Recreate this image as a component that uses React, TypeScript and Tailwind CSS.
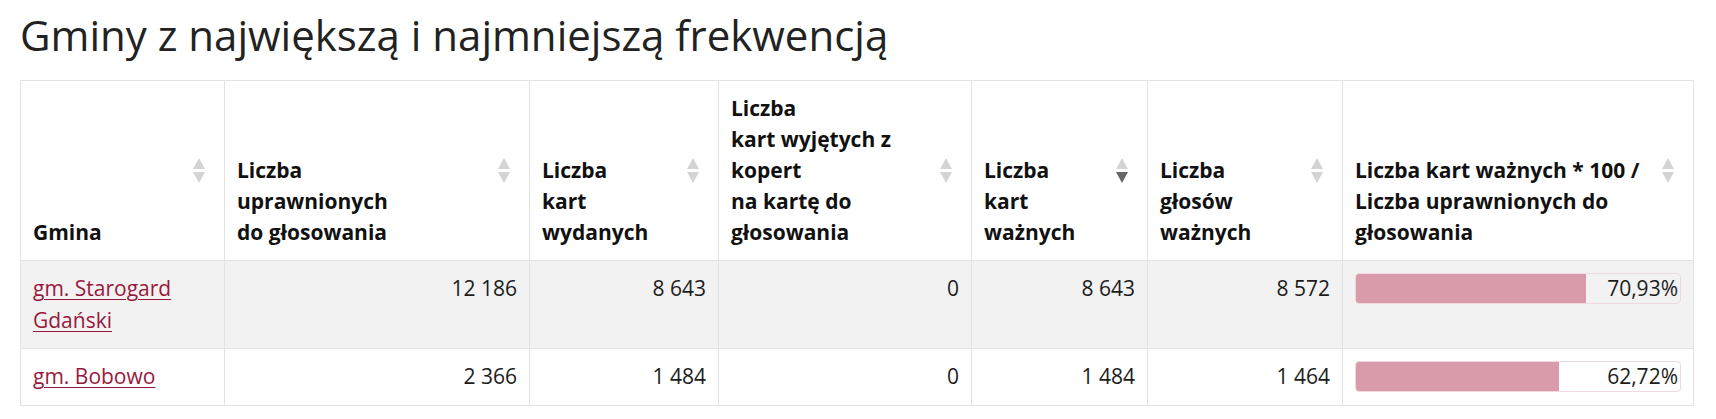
import React from "react";

type SortState = "none" | "desc";

function SortIcon({ state }: { state: SortState }) {
  const up = "#d4d4d4";
  const down = state === "desc" ? "#666666" : "#d4d4d4";
  return (
    <svg width="12" height="26" viewBox="0 0 12 26" className="block">
      <polygon points="6,0 12,11 0,11" fill={up} />
      <polygon points="0,14 12,14 6,25" fill={down} />
    </svg>
  );
}

function Th({
  children,
  state = "none",
}: {
  children: React.ReactNode;
  state?: SortState;
}) {
  return (
    <th className="relative border border-[#e3e3e3] p-3 pr-[44px] text-left align-bottom font-bold leading-[31px] text-[#111]">
      {children}
      <span className="absolute right-[19px] top-1/2 -translate-y-1/2">
        <SortIcon state={state} />
      </span>
    </th>
  );
}

function Bar({ pct, label }: { pct: number; label: string }) {
  return (
    <div className="grid h-[31px] overflow-hidden rounded-[4px] border border-[#f0d9de]">
      <div
        className="[grid-area:1/1] h-full bg-[#d99ba9]"
        style={{ width: `${pct}%` }}
      />
      <div className="[grid-area:1/1] flex items-center justify-end pr-[2px] leading-[29px]">
        {label}
      </div>
    </div>
  );
}

const rows = [
  {
    name: "gm. Starogard Gdański",
    a: "12 186",
    b: "8 643",
    c: "0",
    d: "8 643",
    e: "8 572",
    pct: 70.93,
    label: "70,93%",
    bg: "bg-[#f2f2f2]",
  },
  {
    name: "gm. Bobowo",
    a: "2 366",
    b: "1 484",
    c: "0",
    d: "1 484",
    e: "1 464",
    pct: 62.72,
    label: "62,72%",
    bg: "bg-white",
  },
];

export default function App() {
  return (
    <div className="min-h-[419px] bg-white px-5 pt-[12px] font-['Open_Sans',sans-serif] text-[#1c1c1c]">
      <h2 className="mb-[22px] text-[42px] font-normal leading-[46px] text-[#222]">
        Gminy z największą i najmniejszą frekwencją
      </h2>
      <table className="w-[1673px] table-fixed border-collapse border border-[#e3e3e3] text-[21px] leading-[31.5px]">
        <colgroup>
          <col className="w-[204px]" />
          <col className="w-[305px]" />
          <col className="w-[189px]" />
          <col className="w-[253px]" />
          <col className="w-[176px]" />
          <col className="w-[195px]" />
          <col className="w-[351px]" />
        </colgroup>
        <thead>
          <tr className="bg-white">
            <Th>Gmina</Th>
            <Th>
              Liczba
              <br />
              uprawnionych
              <br />
              do głosowania
            </Th>
            <Th>
              Liczba
              <br />
              kart
              <br />
              wydanych
            </Th>
            <Th>
              Liczba
              <br />
              kart wyjętych z kopert
              <br />
              na kartę do głosowania
            </Th>
            <Th state="desc">
              Liczba
              <br />
              kart
              <br />
              ważnych
            </Th>
            <Th>
              Liczba
              <br />
              głosów
              <br />
              ważnych
            </Th>
            <Th>Liczba kart ważnych * 100 / Liczba uprawnionych do głosowania</Th>
          </tr>
        </thead>
        <tbody>
          {rows.map((r) => (
            <tr key={r.name} className={r.bg}>
              <td className="border border-[#e3e3e3] p-3 align-top">
                <a
                  href="#"
                  className="text-[#99193c] underline decoration-1 underline-offset-[3px]"
                >
                  {r.name}
                </a>
              </td>
              <td className="border border-[#e3e3e3] p-3 text-right align-top">{r.a}</td>
              <td className="border border-[#e3e3e3] p-3 text-right align-top">{r.b}</td>
              <td className="border border-[#e3e3e3] p-3 text-right align-top">{r.c}</td>
              <td className="border border-[#e3e3e3] p-3 text-right align-top">{r.d}</td>
              <td className="border border-[#e3e3e3] p-3 text-right align-top">{r.e}</td>
              <td className="border border-[#e3e3e3] p-3 align-top">
                <Bar pct={r.pct} label={r.label} />
              </td>
            </tr>
          ))}
        </tbody>
      </table>
    </div>
  );
}
